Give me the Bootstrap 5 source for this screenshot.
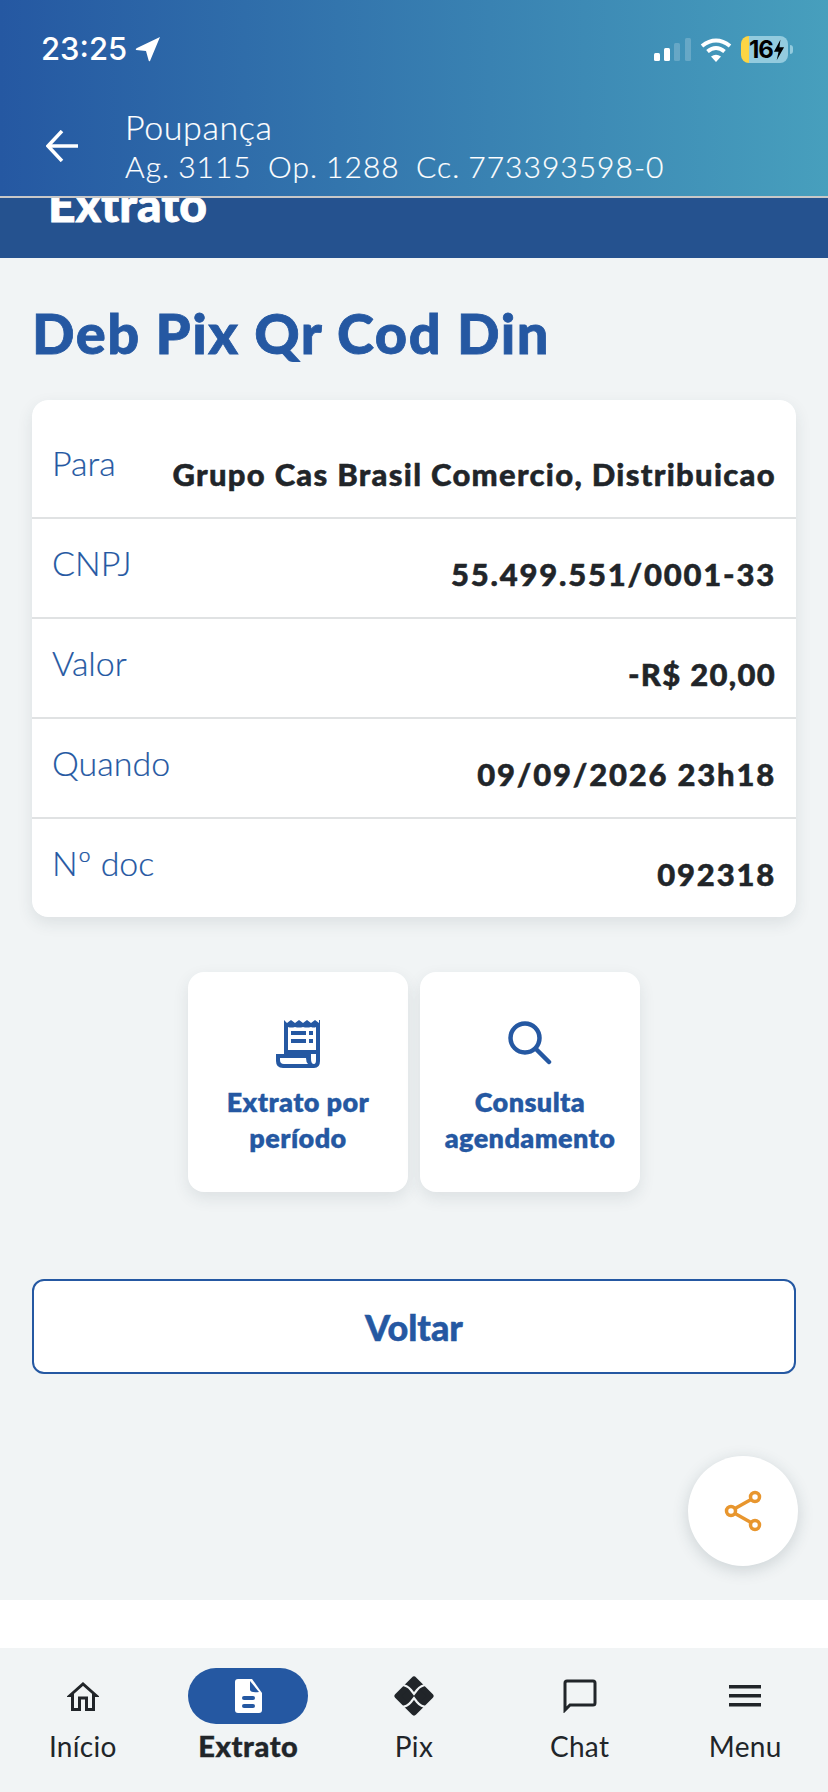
<!DOCTYPE html>
<html lang="pt-BR">
<head>
    <meta charset="UTF-8">
    <title>Extrato</title>
    <link rel="stylesheet" href="https://cdn.jsdelivr.net/npm/bootstrap@5.3.0/dist/css/bootstrap.min.css">
    <style>
        html, body { height: 1792px; overflow: hidden; }
        body { background: #fff; color: #212529; font-family: Lato, "Liberation Sans", sans-serif; }
        .app { width: 828px; height: 1792px; }
        .topo { height: 198px; background: linear-gradient(90deg, #2558a2, #479fbd); border-bottom: 2px solid #c8c8c8; color: #fff; position: relative; z-index: 2; }
        .status { height: 112px; padding: 30px 40px 0 41px; }
        .hora { font-family: Inter, sans-serif; font-size: 31px; font-weight: 500; line-height: 38px; }
        .status-dir { gap: 9px; margin-top: 6px; }
        .bateria { width: 47px; height: 27px; border-radius: 8px; background: linear-gradient(90deg, #fcd545 8px, #93cbde 8px); color: #000; font: 700 24px/27px Inter, sans-serif; padding-left: 8px; letter-spacing: -1px; position: relative; }
        .bateria::after { content: ""; position: absolute; right: -5px; top: 9px; width: 3px; height: 9px; border-radius: 0 3px 3px 0; background: #93cbde; }
        .conta { padding-left: 46px; gap: 47px; }
        .conta-seta { margin-top: -6px; }
        .conta-nome { font-size: 34px; line-height: 38px; font-weight: 300; letter-spacing: .6px; margin-top: -4px; -webkit-text-stroke: .2px #fff; }
        .conta-dados { font-size: 30px; line-height: 40px; font-weight: 300; letter-spacing: 1px; word-spacing: -1px; white-space: pre; -webkit-text-stroke: .2px #fff; }
        .faixa { height: 60px; background: #25528f; color: #fff; overflow: hidden; }
        .faixa-texto { font-size: 48px; font-weight: 900; line-height: 44px; margin: -16px 0 0 48px; -webkit-text-stroke: .8px #fff; }
        .conteudo { height: 1342px; background: #f1f4f5; padding: 0 32px; position: relative; }
        .titulo { font-size: 56px; font-weight: 900; color: #2558a2; line-height: 60px; padding-top: 45px; height: 142px; margin: 0; letter-spacing: 1.5px; -webkit-text-stroke: .8px #2558a2; }
        .detalhe { border: 0; border-radius: 16px; box-shadow: 0 6px 16px rgba(40, 60, 70, .1); height: 517px; overflow: hidden; }
        .linha { border: 0; border-bottom: 2px solid #e0e2e3; padding: 26px 20px 0; height: 100px; }
        .linha:first-child { height: 119px; padding-top: 45px; }
        .linha:last-child { border-bottom: 0; height: 98px; }
        .rotulo { color: #2558a2; font-size: 34px; font-weight: 300; line-height: 36px; -webkit-text-stroke: .2px #2558a2; }
        .valor { font-size: 31px; font-weight: 900; line-height: 34px; margin-top: 12px; letter-spacing: 1.3px; -webkit-text-stroke: .5px #212529; }
        .valor-num { letter-spacing: 1.8px; }
        .atalhos { gap: 12px; margin-top: 55px; }
        .atalho { width: 220px; height: 220px; border-radius: 16px; background: #fff; box-shadow: 0 6px 16px rgba(40, 60, 70, .1); color: #2558a2; font-size: 27px; font-weight: 800; line-height: 36px; padding-top: 48px; letter-spacing: .4px; -webkit-text-stroke: .3px #2558a2; }
        .atalho svg { display: block; margin: 0 auto 16px; }
        .voltar { width: 100%; height: 95px; margin-top: 87px; border: 2px solid #2558a2; border-radius: 12px; background: #fff; color: #2558a2; font-size: 36px; font-weight: 900; -webkit-text-stroke: .5px #2558a2; }
        .voltar:hover { background: #fff; color: #2558a2; border-color: #2558a2; }
        .fab { position: absolute; left: 688px; top: 1198px; width: 110px; height: 110px; background: #fff; box-shadow: 0 4px 16px rgba(40, 60, 70, .18); }
        .vazio { height: 48px; background: #fff; }
        .rodape { height: 144px; background: #f1f4f5; }
        .aba { width: 20%; padding-top: 20px; font-size: 28px; font-weight: 400; line-height: 34px; letter-spacing: .3px; }
        .aba-icone { width: 120px; height: 56px; border-radius: 28px; margin-bottom: 5px; }
        .aba-ativa { font-weight: 900; font-size: 29px; letter-spacing: .6px; -webkit-text-stroke: .4px #212529; }
        .aba-ativa .aba-icone { background: #2558a2; }
    </style>
</head>
<body>
<div class="app">
    <div class="topo">
        <div class="status d-flex justify-content-between align-items-start">
            <div class="hora d-flex align-items-center gap-2">
                <span>23:25</span>
                <svg width="26" height="26" viewBox="0 0 26 26"><path d="M25 1 L15 25 Q14 26 13.500 24 L11 15 L1 14 Q0 13 2 12 Z" fill="#fff"/></svg>
            </div>
            <div class="status-dir d-flex align-items-center">
                <svg width="37" height="24" viewBox="0 0 37 24"><rect x="0" y="15" width="6" height="8" rx="1.500" fill="#fff"/><rect x="10" y="10" width="6" height="13" rx="1.500" fill="#fff"/><rect x="20" y="5" width="6" height="18" rx="1.500" fill="#fff" fill-opacity=".2"/><rect x="31" y="0" width="6" height="23" rx="1.500" fill="#fff" fill-opacity=".2"/></svg>
                <svg width="32" height="26" viewBox="0 0 32 26" fill="none" stroke="#fff" stroke-width="4"><path d="M2 9 Q16 -2 30 9"/><path d="M7.500 14.500 Q16 7.500 24.500 14.500"/><path d="M16 25 L11 19.500 Q16 16 21 19.500 Z" fill="#fff" stroke="none"/></svg>
                <div class="bateria d-flex align-items-center">16<svg width="12" height="22" viewBox="0 0 13 22"><path d="M8 0 L1 13 H6 L4 22 L12 8 H7 Z" fill="#000"/></svg></div>
            </div>
        </div>
        <div class="conta d-flex align-items-center">
            <svg class="conta-seta" width="32" height="32" viewBox="0 0 32 32" fill="none" stroke="#fff" stroke-width="3.500"><path d="M32 16 H3"/><path d="M16 1 L2 16 L16 31"/></svg>
            <div>
                <div class="conta-nome">Poupança</div>
                <div class="conta-dados">Ag. 3115  Op. 1288  Cc. 773393598-0</div>
            </div>
        </div>
    </div>
    <div class="faixa"><div class="faixa-texto">Extrato</div></div>
    <div class="conteudo">
        <h1 class="titulo">Deb Pix Qr Cod Din</h1>
        <div class="list-group detalhe">
            <div class="list-group-item linha d-flex justify-content-between"><span class="rotulo">Para</span><span class="valor">Grupo Cas Brasil Comercio, Distribuicao</span></div>
            <div class="list-group-item linha d-flex justify-content-between"><span class="rotulo">CNPJ</span><span class="valor valor-num">55.499.551/0001-33</span></div>
            <div class="list-group-item linha d-flex justify-content-between"><span class="rotulo">Valor</span><span class="valor">-R$ 20,00</span></div>
            <div class="list-group-item linha d-flex justify-content-between"><span class="rotulo">Quando</span><span class="valor valor-num">09/09/2026 23h18</span></div>
            <div class="list-group-item linha d-flex justify-content-between"><span class="rotulo">Nº doc</span><span class="valor valor-num">092318</span></div>
        </div>
        <div class="atalhos d-flex justify-content-center">
            <div class="atalho text-center">
                <svg width="44" height="48" viewBox="0 0 44 48" fill="#2558a2"><path d="M8 0 L11 3 L15 0 L19 3 L23 0 L27 3 L31 0 L35 3 L39 0 L43 3 V0 H44 V41 Q44 48 38 48 H7 Q0 48 0 41 V34 H8 Z M12 7 V30 H40 V7 Q38 8 35 7 Q31 8 27 7 Q23 8 19 7 Q15 8 12 7 Z M4 38 V40 Q4 44 8 44 H32 Q30 42 30 38 Z M35 34 V39 Q35 44 38 44 Q40 44 40 40 V34 Z"/><rect x="15" y="11" width="15" height="4"/><rect x="33" y="11" width="4" height="4"/><rect x="15" y="19" width="15" height="4"/><rect x="33" y="19" width="4" height="4"/></svg>
                Extrato por<br>período
            </div>
            <div class="atalho text-center">
                <svg width="44" height="48" viewBox="0 0 44 48" fill="none" stroke="#2558a2" stroke-width="4.500" stroke-linecap="round"><circle cx="17" cy="18" r="14.500"/><path d="M28 29 L41 42"/></svg>
                Consulta<br>agendamento
            </div>
        </div>
        <button class="btn voltar" type="button">Voltar</button>
        <div class="fab rounded-circle d-flex align-items-center justify-content-center">
            <svg width="40" height="44" viewBox="0 0 40 44" fill="none" stroke="#e8962e" stroke-width="3.500"><circle cx="32" cy="8" r="4.500"/><circle cx="8" cy="22" r="4.500"/><circle cx="32" cy="36" r="4.500"/><path d="M12 19.500 L28 10.500"/><path d="M12 24.500 L28 33.500"/></svg>
        </div>
    </div>
    <div class="vazio"></div>
    <nav class="rodape d-flex">
        <div class="aba d-flex flex-column align-items-center">
            <div class="aba-icone d-flex align-items-center justify-content-center">
                <svg width="32" height="29" viewBox="0 0 32 29" fill="none" stroke="#212529" stroke-width="3"><path d="M3 13.500 L16 2 L29 13.500 H26.500 V27.500 H19.500 V16 H12.500 V27.500 H5.500 V13.500 Z"/></svg>
            </div>
            <span>Início</span>
        </div>
        <div class="aba aba-ativa d-flex flex-column align-items-center">
            <div class="aba-icone d-flex align-items-center justify-content-center">
                <svg width="27" height="34" viewBox="0 0 27 34"><path d="M3 0 H17 L27 14 V31 Q27 34 24 34 H3 Q0 34 0 31 V3 Q0 0 3 0 Z" fill="#fff"/><path d="M15 2 L24 13 Q16 14 15 11 Z" fill="#2558a2"/><rect x="7" y="17" width="13" height="4" rx="2" fill="#2558a2"/><rect x="7" y="25" width="13" height="4" rx="2" fill="#2558a2"/></svg>
            </div>
            <span>Extrato</span>
        </div>
        <div class="aba d-flex flex-column align-items-center">
            <div class="aba-icone d-flex align-items-center justify-content-center">
                <svg width="40" height="40" viewBox="0 0 40 40"><path d="M20 3.500 L36.500 20 L20 36.500 L3.500 20 Z" fill="#212529" stroke="#212529" stroke-width="6" stroke-linejoin="round"/><path d="M7 9 Q13 9 17 14 L20 18 L23 14 Q27 9 33 9 M7 31 Q13 31 17 26 L20 22 L23 26 Q27 31 33 31" fill="none" stroke="#f1f4f5" stroke-width="2.200"/></svg>
            </div>
            <span>Pix</span>
        </div>
        <div class="aba d-flex flex-column align-items-center">
            <div class="aba-icone d-flex align-items-center justify-content-center">
                <svg width="34" height="34" viewBox="0 0 34 34" fill="none" stroke="#212529" stroke-width="3"><path d="M2 31 V4 Q2 2 4 2 H30 Q32 2 32 4 V24 Q32 26 30 26 H7 Z"/></svg>
            </div>
            <span>Chat</span>
        </div>
        <div class="aba d-flex flex-column align-items-center">
            <div class="aba-icone d-flex align-items-center justify-content-center">
                <svg width="32" height="22" viewBox="0 0 32 22" fill="#212529"><rect y="0" width="32" height="3.500"/><rect y="9" width="32" height="3.500"/><rect y="18" width="32" height="3.500"/></svg>
            </div>
            <span>Menu</span>
        </div>
    </nav>
</div>
<script src="https://cdn.jsdelivr.net/npm/bootstrap@5.3.0/dist/js/bootstrap.bundle.min.js"></script>
</body>
</html>
